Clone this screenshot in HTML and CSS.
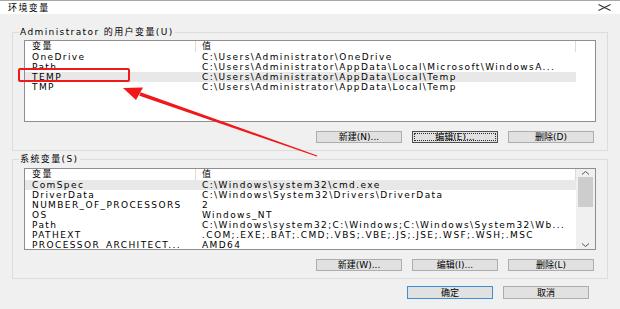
FILE: index.html
```html
<!DOCTYPE html>
<html lang="zh-CN">
    <head>
        <meta charset="UTF-8" />
        <title>环境变量</title>
        <link rel="stylesheet" href="styles.css">
    </head>
    <body>
        <!--Title bar-->
        <header class="titlebar">
            <span class="title">环境变量</span>
            <svg class="close" width="13" height="7" viewBox="0 0 13 7">
                <path d="M0.5 0.5 L12.5 6.5 M0.5 6.5 L12.5 0.5" stroke="#333" stroke-width="1.1" fill="none"/>
            </svg>
        </header>

        <main class="content">
            <!--User variables-->
            <fieldset class="group">
                <legend>Administrator 的用户变量(U)</legend>
                <div class="list">
                    <div class="cols">
                        <div class="row head"><span>变量</span><span>值</span></div>
                        <div class="row"><span>OneDrive</span><span>C:\Users\Administrator\OneDrive</span></div>
                        <div class="row"><span>Path</span><span>C:\Users\Administrator\AppData\Local\Microsoft\WindowsA...</span></div>
                        <div class="row selected"><span>TEMP</span><span>C:\Users\Administrator\AppData\Local\Temp</span></div>
                        <div class="row"><span>TMP</span><span>C:\Users\Administrator\AppData\Local\Temp</span></div>
                    </div>
                    <div class="gutter"></div>
                </div>
                <div class="buttons">
                    <button>新建(N)...</button>
                    <button class="focused">编辑(E)...</button>
                    <button>删除(D)</button>
                </div>
            </fieldset>

            <!--System variables-->
            <fieldset class="group second">
                <legend>系统变量(S)</legend>
                <div class="list">
                    <div class="cols">
                        <div class="row head"><span>变量</span><span>值</span></div>
                        <div class="row selected"><span>ComSpec</span><span>C:\Windows\system32\cmd.exe</span></div>
                        <div class="row"><span>DriverData</span><span>C:\Windows\System32\Drivers\DriverData</span></div>
                        <div class="row"><span>NUMBER_OF_PROCESSORS</span><span>2</span></div>
                        <div class="row"><span>OS</span><span>Windows_NT</span></div>
                        <div class="row"><span>Path</span><span>C:\Windows\system32;C:\Windows;C:\Windows\System32\Wb...</span></div>
                        <div class="row"><span>PATHEXT</span><span>.COM;.EXE;.BAT;.CMD;.VBS;.VBE;.JS;.JSE;.WSF;.WSH;.MSC</span></div>
                        <div class="row"><span>PROCESSOR_ARCHITECT...</span><span>AMD64</span></div>
                    </div>
                    <div class="scrollbar">
                        <svg class="arrow" width="9" height="8" viewBox="0 0 9 8"><path d="M1 5.5 L4.5 2.5 L8 5.5" stroke="#555" stroke-width="1" fill="none"/></svg>
                        <div class="thumb"></div>
                        <div class="track"></div>
                        <svg class="arrow" width="9" height="8" viewBox="0 0 9 8"><path d="M1 2.5 L4.5 5.5 L8 2.5" stroke="#555" stroke-width="1" fill="none"/></svg>
                    </div>
                </div>
                <div class="buttons">
                    <button>新建(W)...</button>
                    <button>编辑(I)...</button>
                    <button>删除(L)</button>
                </div>
            </fieldset>

            <div class="buttons dialog">
                <button class="default">确定</button>
                <button>取消</button>
            </div>
        </main>

        <!--Annotation overlay-->
        <div class="mark"></div>
        <svg class="pointer" width="620" height="309" viewBox="0 0 620 309">
            <polygon points="140.6,92.3 139.4,95.7 316.8,156.6 317.2,155.4" fill="#f01818"/>
            <polygon points="123,88 143,87.5 136,100" fill="#f01818"/>
        </svg>
    </body>
</html>
```

FILE: styles.css
```css
/* Environment variables dialog */
:root {
    --face: #f0f0f0;
    --line: #dcdcdc;
    --select: #e8e8e8;
    --red: #f01818;
}
body {
    margin: 0;
    width: 620px;
    height: 309px;
    overflow: hidden;
    position: relative;
    background-color: var(--face);
    color: #000;
    font-family: "DejaVu Sans", "Noto Sans CJK SC", sans-serif;
    font-size: 9px;
    letter-spacing: 1.4px;
}
.titlebar {
    height: 13px;
    border-top: 1px solid #a8a8a8;
    background-color: white;
    display: flex;
    align-items: center;
    justify-content: space-between;
    padding: 0 9px 0 8px;
}
.close {
    display: block;
}
.content {
    padding: 12px 12px 0 12px;
}
.group {
    margin: 0;
    border: 1px solid var(--line);
    padding: 2px 11px 7px 11px;
}
.group.second {
    margin-top: 2px;
    padding-top: 3px;
}
.group legend {
    margin-left: -5px;
    padding: 0 1px;
    line-height: 12px;
}
.list {
    display: flex;
    height: 82px;
    box-sizing: border-box;
    border: 1px solid #8e8e8e;
    background-color: white;
    overflow: hidden;
}
.cols {
    flex: 1;
    min-width: 0;
}
.gutter {
    width: 19px;
}
.row {
    display: grid;
    grid-template-columns: 171px 1fr;
    height: 10px;
    line-height: 10px;
    white-space: nowrap;
}
.row span {
    overflow: hidden;
    padding-left: 7px;
}
.row span + span {
    padding-left: 6px;
}
.row.head {
    height: 11px;
    line-height: 11px;
}
.row.head span {
    border-right: 1px solid var(--line);
}
.row.selected {
    background-color: var(--select);
}
.scrollbar {
    width: 19px;
    display: flex;
    flex-direction: column;
    align-items: center;
    background-color: var(--face);
}
.arrow {
    display: block;
    flex: 0 0 8px;
}
.thumb {
    width: 15px;
    height: 30px;
    background-color: #cdcdcd;
}
.track {
    flex: 1;
}
.buttons {
    display: flex;
    justify-content: flex-end;
    gap: 10px;
    margin-top: 9px;
    padding-right: 2px;
}
.buttons button {
    width: 86px;
    height: 12px;
    box-sizing: border-box;
    padding: 0;
    margin: 0;
    border: 1px solid #adadad;
    background-color: #e1e1e1;
    font: inherit;
    line-height: 10px;
    color: #000;
}
.buttons button.focused {
    border-color: #505050;
    outline: 1px dotted #303030;
    outline-offset: -3px;
}
.buttons button.default {
    border-color: #3c8fd8;
}
.buttons.dialog {
    margin-top: 7px;
    padding-right: 19px;
}
.buttons.dialog button {
    width: 86px;
    height: 13px;
}
/* Red annotation */
.mark {
    position: absolute;
    left: 18px;
    top: 68px;
    width: 108px;
    height: 10px;
    border: 2px solid var(--red);
    border-radius: 2px;
}
.pointer {
    position: absolute;
    left: 0;
    top: 0;
}
```
